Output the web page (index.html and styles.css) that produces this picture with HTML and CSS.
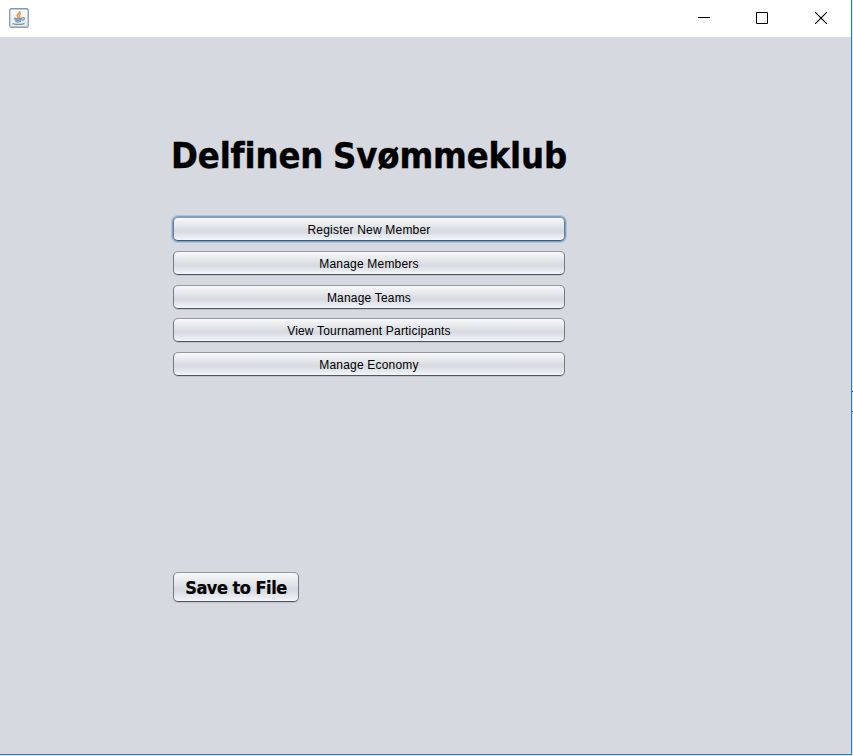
FILE: index.html
```html
<!DOCTYPE html>
<html lang="da">
<head>
<meta charset="utf-8">
<title>Delfinen</title>
<link rel="stylesheet" href="styles.css">
</head>
<body>
<div class="window">
  <header class="titlebar">
    <svg class="java" width="20" height="20" viewBox="0 0 20 20">
      <defs><linearGradient id="f" x1="0" y1="0" x2="0" y2="1"><stop offset="0" stop-color="#7a9ab5"/><stop offset="1" stop-color="#8ba0b2"/></linearGradient>
      <linearGradient id="g" x1="0" y1="0" x2="0" y2="1"><stop offset="0" stop-color="#fff"/><stop offset="1" stop-color="#e4e6e8"/></linearGradient></defs>
      <rect x=".75" y=".75" width="18.5" height="18.5" rx="1.5" fill="url(#g)" stroke="url(#f)" stroke-width="1.3"/>
      <path d="M10.800 3c.8 2-3 2.800-2.600 4.600.2 1 1 1.400 1.200 2.200M12 5.600c-2 .8-2.300 1.600-1.500 2.400.5.600.2 1.200-.5 1.700" fill="none" stroke="#ec9a55" stroke-width="1.600"/>
      <path d="M5 9.800c2 1 6 1 8.500 0M5.500 11.600c2 .9 5 .9 7.500 0M6.500 13.300c2 .8 4 .8 5.500 0M13.300 9.800c3-.6 2.800 2.200-.4 2.600M4 15.200c0 1.700 10 1.600 11.500 0" fill="none" stroke="#7695ae" stroke-width="1.300"/>
    </svg>
    <div class="controls">
      <svg width="12" height="12" viewBox="0 0 12 12"><path d="M0 5.500H12" stroke="#000"/></svg>
      <svg width="12" height="12" viewBox="0 0 12 12"><path d="M.5.500h11v11H.5z" fill="none" stroke="#000"/></svg>
      <svg width="12" height="12" viewBox="0 0 12 12"><path d="M0 0L12 12M12 0L0 12" stroke="#000" stroke-width="1.100"/></svg>
    </div>
  </header>
  <main class="content">
    <h1 class="title">Delfinen Svømmeklub</h1>
    <nav class="menu">
      <button class="btn focused">Register New Member</button>
      <button class="btn">Manage Members</button>
      <button class="btn teams">Manage Teams</button>
      <button class="btn">View Tournament Participants</button>
      <button class="btn">Manage Economy</button>
    </nav>
    <button class="btn save">Save to File</button>
  </main>
</div>
<aside class="edge"><i class="tick"></i><i class="tick"></i></aside>
</body>
</html>
```

FILE: styles.css
```css
* { box-sizing: border-box; }
body { margin: 0; width: 853px; height: 756px; display: flex; overflow: hidden; background: #dce4ea; }
.window {
  width: 852px; height: 755px;
  border-right: 1px solid #1883d7; border-bottom: 1px solid #1883d7;
  background: #d6d9df;
}
.titlebar {
  height: 37px; padding: 8px 24px 0 9px; background: #fff;
  display: flex; justify-content: space-between; align-items: flex-start;
}
.java { display: block; }
.controls { display: flex; gap: 46px; padding-top: 4px; }
.controls svg { display: block; }
.controls svg:last-child { margin-left: 1px; }
.content { padding: 94px 0 0 173px; }
.title {
  margin: 0 0 0 -2px; white-space: nowrap;
  font: bold 36px/50px "DejaVu Sans Condensed", "DejaVu Sans", sans-serif;
  font-stretch: condensed; color: #000;
  font-variant-ligatures: none; letter-spacing: -0.120px; word-spacing: -1.300px; -webkit-text-stroke: 0.400px #000;
}
.menu { display: flex; flex-direction: column; gap: 10px; margin-top: 36px; width: 392px; }
.teams { margin-bottom: -1px; }
.btn {
  display: block; width: 100%; height: 24px; padding: 1px 0 0;
  border: 1px solid; border-color: #95989e #777a80 #53565d #777a80; border-radius: 5px;
  background: linear-gradient(#f8f9fa 0%, #e7e9ec 30%, #d7dae0 58%, #d9dce2 65%, #f2f5fa 100%);
  box-shadow: 0 1px 0 #bfc2c8;
  font: 12px/20px "Liberation Sans", Arial, sans-serif; letter-spacing: 0.190px; color: #000; text-align: center;
}
.focused { box-shadow: 0 0 0 1px #73a4d1, 0 0 0 2px #a9c5e0; }
.save {
  width: 126px; height: 30px; margin-top: 196px; padding: 1px 0 0;
  font: bold 18px/27px "DejaVu Sans Condensed", "DejaVu Sans", sans-serif; font-stretch: condensed;
  letter-spacing: -0.500px; -webkit-text-stroke: 0.200px #000;
}
.edge { width: 1px; height: 756px; padding-top: 391px; display: flex; flex-direction: column; gap: 19px; }
.tick { display: block; height: 1px; background: #35526b; }
```
